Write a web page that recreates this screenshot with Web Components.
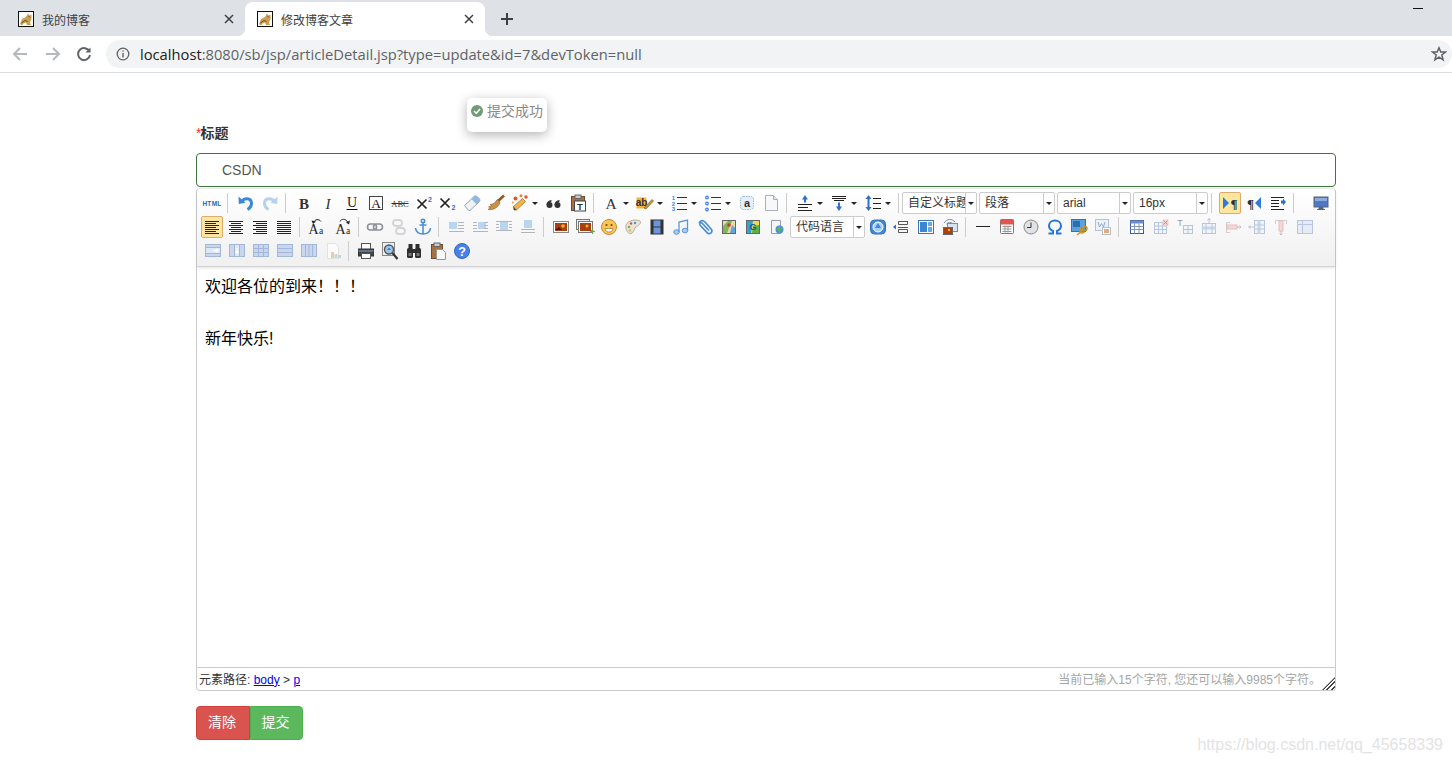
<!DOCTYPE html>
<html lang="zh">
<head>
<meta charset="utf-8">
<title>修改博客文章</title>
<style>
html, body { margin: 0; height: 100%; overflow: hidden; background: #fff; }
body { font-family: "Liberation Sans", "Noto Sans CJK SC", sans-serif; }
</style>
</head>
<body>
<browser-chrome>
  <browser-tab>我的博客</browser-tab>
  <browser-tab active>修改博客文章</browser-tab>
</browser-chrome>
<article-form></article-form>
<toast-message>提交成功</toast-message>
<water-mark>https://blog.csdn.net/qq_45658339</water-mark>

<script>
/**
 * Draws a stack of horizontal lines.
 *
 * @param {number} x1 left edge.
 * @param {number} x2 right edge.
 * @param {number[]} ys the y of every line.
 * @param {string} c stroke colour.
 * @returns {string} svg markup.
 */
const ln = (x1, x2, ys, c = '#333') => `<path d="${ys.map(y => `M${x1} ${y}H${x2}`).join('')}" stroke="${c}" fill="none"/>`

const serif = 'font-family="Liberation Serif, serif"'
const sans = 'font-family="Liberation Sans, sans-serif"'
const imgAlign = (box, rows) => `<rect x="${box[0]}" y="${box[1]}" width="${box[2]}" height="${box[3]}" fill="#8fc0ea"/>${rows}`

// toolbar icons, all in a 20x20 box
const icons = {
  html: `<text x="10" y="13" text-anchor="middle" font-size="6.5" font-weight="700" letter-spacing=".3" fill="#2a6aa5" ${sans}>HTML</text>`,
  undo: '<path d="M5.5 9C8 4.5 15 4.500 15.500 10C15.700 13 14 15 11.500 16.500" fill="none" stroke="#3b87d8" stroke-width="3"/><path d="M2.500 3.500L9.500 9.800L2.800 11Z" fill="#3b87d8"/>',
  redo: '<path d="M14.500 9C12 4.500 5 4.500 4.500 10C4.300 13 6 15 8.500 16.500" fill="none" stroke="#b4d2f0" stroke-width="3"/><path d="M17.500 3.500L10.500 9.800L17.200 11Z" fill="#b4d2f0"/>',
  bold: `<text x="10" y="15.500" text-anchor="middle" font-size="15" font-weight="700" fill="#333" ${serif}>B</text>`,
  italic: `<text x="10" y="15.500" text-anchor="middle" font-size="15" font-style="italic" fill="#333" ${serif}>I</text>`,
  underline: `<text x="10" y="14" text-anchor="middle" font-size="14" fill="#222" ${serif}>U</text>${ln(4.500, 15.500, [16.500], '#111')}`,
  fontborder: `<rect x="3.500" y="3.500" width="13" height="13" fill="#fff" stroke="#444"/><text x="10" y="15" text-anchor="middle" font-size="13.500" fill="#222" ${serif}>A</text>`,
  strike: `<text x="10" y="13.500" text-anchor="middle" font-size="8.500" fill="#444" ${serif}>ABC</text>${ln(1.500, 18.500, [10.500], '#333')}`,
  sup: '<path d="M3.500 6.500L12.500 15.500M12.500 6.500L3.500 15.500" stroke="#222" stroke-width="1.700"/><text x="16" y="8.500" text-anchor="middle" font-size="7" font-weight="700" fill="#2b6fd4" font-family="Liberation Sans, sans-serif">2</text>',
  sub: '<path d="M2.500 5.500L11.500 14.500M11.500 5.500L2.500 14.500" stroke="#222" stroke-width="1.700"/><text x="15.500" y="17" text-anchor="middle" font-size="7" font-weight="700" fill="#2b6fd4" font-family="Liberation Sans, sans-serif">2</text>',
  eraser: '<path d="M2.500 12.500L12 3.500C13 2.700 14 2.700 15 3.500L17.500 6C18.200 7 18 8 17 9L8 17.500H6.500Z" fill="#eef1f5" stroke="#9aa3ad"/><path d="M12 3.500C13 2.700 14 2.700 15 3.500L17.500 6C18.200 7 18 8 17 9L14.500 11.200L9.500 6Z" fill="#8fb7e4"/>',
  brush: '<path d="M18 2.500L11 9" stroke="#8a5a22" stroke-width="2.600"/><path d="M11.500 6.500L14 9.500C12.500 14.500 7 17.500 2 16.500L5 14.500L2.500 14L6 12.500L4 11.500C7 11.500 9.500 9.500 11.500 6.500Z" fill="#c4924a" stroke="#8a5f2a" stroke-width=".6"/>',
  wand: '<path d="M4 17L3.500 13.500L12.500 5.500L15.500 8.500L6.500 17Z" fill="#f0b44c" stroke="#a9752d" stroke-width=".8"/><path d="M3.500 13.500L4 17L6.500 17Z" fill="#444"/><circle cx="5.500" cy="5.500" r="2" fill="#e2562f"/><circle cx="11" cy="2.800" r="1.500" fill="#e2862f"/><circle cx="16" cy="4" r="1.700" fill="#e2562f"/><circle cx="2.800" cy="9.500" r="1" fill="#e2a82f"/>',
  quote: '<g fill="#333"><circle cx="5.500" cy="12" r="3"/><circle cx="13.500" cy="12" r="3"/><path d="M2.500 12C2.500 9 4.500 7.500 7.500 7L7.500 8.500C6 9 5.500 10 5.500 11ZM10.500 12C10.500 9 12.500 7.500 15.500 7L15.500 8.500C14 9 13.500 10 13.500 11Z"/></g>',
  paste: `<rect x="3.500" y="3.500" width="13" height="14" fill="#a9713f" stroke="#70482a"/><rect x="7" y="2" width="6" height="3.500" fill="#ccc" stroke="#666"/><rect x="6.500" y="8" width="11" height="10" fill="#fff" stroke="#445"/><text x="12" y="16.500" text-anchor="middle" font-size="9.500" font-weight="700" fill="#234" ${sans}>T</text>`,
  fontcolor: `<text x="10" y="15.500" text-anchor="middle" font-size="15.500" fill="#333" ${serif}>A</text>`,
  backcolor: `<rect x="1.500" y="4.500" width="10" height="11" fill="#f2b23d"/><text x="6.500" y="13" text-anchor="middle" font-size="10" font-weight="700" fill="#333" ${sans}>ab</text><path d="M9 15L17 6.500L18.500 8L11 16Z" fill="#c9973e" stroke="#6f5320" stroke-width=".6"/>`,
  ol: `<text x="4.500" y="7" text-anchor="middle" font-size="6" font-weight="700" fill="#3b7fe0" ${sans}>1</text><text x="4.500" y="12.500" text-anchor="middle" font-size="6" font-weight="700" fill="#3b7fe0" ${sans}>2</text><text x="4.500" y="18" text-anchor="middle" font-size="6" font-weight="700" fill="#3b7fe0" ${sans}>3</text>${ln(8, 18, [4.500, 10.500, 16.500], '#333')}`,
  ul: `<g fill="none" stroke="#3b7fe0" stroke-width="1.200"><circle cx="4" cy="4.500" r="1.300"/><circle cx="4" cy="10.500" r="1.300"/><circle cx="4" cy="16.500" r="1.300"/></g>${ln(8, 18, [4.500, 10.500, 16.500], '#333')}`,
  selectall: `<rect x="3.500" y="3.500" width="13" height="13" rx="3" fill="#e8eff8" stroke="#8fb2dc" stroke-dasharray="1.500 1"/><text x="10" y="14" text-anchor="middle" font-size="11" font-weight="700" fill="#333" ${sans}>a</text>`,
  cleardoc: '<path d="M4.500 2.500H12.500L16.500 6.500V17.500H4.500Z" fill="#f7f8f9" stroke="#aab0b6"/><path d="M12.500 2.500V6.500H16.500" fill="#e2e4e6" stroke="#aab0b6"/>',
  rowtop: `<path d="M10 2L13 6.500H11V9.500H9V6.500H7Z" fill="#2f6fd0"/>${ln(3, 17, [11.500, 17.500], '#222')}${ln(3, 13, [14.500], '#222')}`,
  rowbottom: `${ln(3, 17, [3.500], '#222')}${ln(3, 17, [5.500], '#222')}${ln(5, 15, [7.500], '#222')}<path d="M10 18L13 13.500H11V9.500H9V13.500H7Z" fill="#2f6fd0"/>`,
  lineheight: `<path d="M5.500 2L8.500 6H6.500V14H8.500L5.500 18L2.500 14H4.500V6H2.500Z" fill="#2f6fd0"/>${ln(10, 18, [5.500, 10.500, 15.500], '#222')}`,
  ltr: `<path d="M3 4L9 10L3 16Z" fill="#2f7bdc"/><text x="14" y="15" text-anchor="middle" font-size="13" font-weight="700" fill="#234" ${serif}>¶</text>`,
  rtl: `<path d="M17 4L11 10L17 16Z" fill="#2f7bdc"/><text x="6.500" y="15" text-anchor="middle" font-size="13" font-weight="700" fill="#234" ${serif}>¶</text>`,
  indent: `${ln(3, 16, [4.500, 16.500], '#222')}${ln(3, 11, [7.500, 10.500, 13.500], '#222')}<path d="M13 7.500H15V5.500L18 9L15 12.500V10.500H13Z" fill="#2f6fd0"/>`,
  full: '<rect x="3" y="4" width="14" height="10" fill="#4d78c8" stroke="#567"/><path d="M4 5H16V8H4Z" fill="#8eabe0"/><path d="M8 14.500H12V16H8ZM6 16.500H14" stroke="#567" fill="#567"/>',
  left: ln(3, 17, [4.500, 8.500, 12.500, 16.500], '#222') + ln(3, 14, [6.500, 10.500, 14.500], '#222'),
  center: ln(3, 17, [4.500, 8.500, 12.500, 16.500], '#222') + ln(5, 15, [6.500, 10.500, 14.500], '#222'),
  right: ln(3, 17, [4.500, 8.500, 12.500, 16.500], '#222') + ln(6, 17, [6.500, 10.500, 14.500], '#222'),
  justify: ln(3, 17, [4.500, 6.500, 8.500, 10.500, 12.500, 14.500, 16.500], '#222'),
  tolower: `<text x="7.500" y="17" text-anchor="middle" font-size="14" fill="#222" ${serif}>A</text><text x="15" y="17" text-anchor="middle" font-size="9.500" fill="#222" ${serif}>a</text><path d="M8 5C8.500 2.500 13 1.500 15 4.500" fill="none" stroke="#222"/><path d="M5.500 3.500L10 4.500L7 7Z" fill="#222"/>`,
  toupper: `<text x="7.500" y="17" text-anchor="middle" font-size="14" fill="#222" ${serif}>A</text><text x="15" y="17" text-anchor="middle" font-size="9.500" fill="#222" ${serif}>a</text><path d="M7 4.500C8 1.500 13 1.500 14.500 5" fill="none" stroke="#222"/><path d="M17 3.500L16 7.500L13 5.500Z" fill="#222"/>`,
  link: '<rect x="2.500" y="7" width="9" height="6" rx="3" fill="none" stroke="#8b8f96" stroke-width="1.600"/><rect x="8.500" y="7" width="9" height="6" rx="3" fill="none" stroke="#8b8f96" stroke-width="1.600"/>',
  unlink: '<rect x="4" y="3" width="9" height="6" rx="3" fill="none" stroke="#d2d4d7" stroke-width="1.800"/><rect x="7" y="11" width="9" height="6" rx="3" fill="none" stroke="#d2d4d7" stroke-width="1.800"/>',
  anchor: '<g fill="none" stroke="#4d8fd6" stroke-width="1.600"><circle cx="10" cy="4" r="1.700"/><path d="M10 5.800V17M6.500 8H13.500M2.500 11C3 15 6 17 10 17C14 17 17 15 17.500 11"/></g>',
  imgleft: imgAlign([3, 5, 8, 7], ln(12, 18, [5.500, 8.500, 11.500], '#889')) + ln(3, 18, [14.500], '#889'),
  imgright: imgAlign([8, 5, 8, 7], ln(3, 7, [5.500, 8.500, 11.500], '#889')) + ln(14, 18, [5.500, 8.500, 11.500], '#889') + ln(3, 18, [14.500], '#889'),
  imgnone: imgAlign([6, 5, 8, 8], ln(2, 18, [4.500, 13.500], '#889')) + ln(2, 5, [7.500, 10.500], '#889') + ln(15, 18, [7.500, 10.500], '#889'),
  imgcenter: imgAlign([6, 3, 8, 8], ln(3, 17, [12.500, 15.500], '#889')),
  image: '<rect x="2.500" y="4.500" width="15" height="11" fill="#fff" stroke="#888"/><rect x="4" y="6" width="12" height="8" fill="#a8400f"/><circle cx="12" cy="9" r="1.800" fill="#f6b02c"/><path d="M4 13L8 10L11 13Z" fill="#3a1d06"/>',
  images: '<rect x="1.500" y="2.500" width="13" height="10" fill="#eee" stroke="#777"/><rect x="3.500" y="4.500" width="14" height="11" fill="#fff" stroke="#777"/><rect x="5" y="6" width="11" height="8" fill="#a8400f"/><circle cx="12" cy="9" r="1.500" fill="#f6b02c"/><path d="M16 13H18.500V15.500H16V13Z M17 12H18V17H17Z M15 14H20V15H15Z" fill="#64b23c"/>',
  emotion: '<circle cx="10" cy="10" r="7.500" fill="#f9c74f" stroke="#c9873a"/><circle cx="7.500" cy="8" r="1.100" fill="#7a4a14"/><circle cx="12.500" cy="8" r="1.100" fill="#7a4a14"/><path d="M6 11.500H14C14 14 12 15 10 15C8 15 6 14 6 11.500Z" fill="#fff" stroke="#a9672a" stroke-width=".7"/>',
  palette: '<path d="M3 8C5 3 13 2 17 4C19 6 15 9 13 10C11 11 12 13 9 16C6 18 2 14 3 8Z" fill="#e8e4d6" stroke="#b7b19b"/><circle cx="8" cy="6.500" r="1.200" fill="#d9534f"/><circle cx="12" cy="6" r="1.200" fill="#4a90d9"/><circle cx="6" cy="10" r="1.200" fill="#6db24a"/><circle cx="7" cy="13.500" r="1.200" fill="#e8b63a"/>',
  film: '<rect x="3.500" y="2.500" width="13" height="15" fill="#333"/><rect x="6.500" y="3.500" width="7" height="6" fill="#6d95dd"/><rect x="6.500" y="10.500" width="7" height="6" fill="#6d95dd"/>',
  music: '<g fill="#a9cdf2" stroke="#5c97d6"><ellipse cx="5.500" cy="15" rx="2.800" ry="2.300"/><ellipse cx="14" cy="13.500" rx="2.800" ry="2.300"/><path d="M8 15V5L16.500 3V13.500" fill="none" stroke-width="1.300"/></g>',
  clip: '<path d="M4 6C6 3 8 3 10 5L16.500 12.500C18 15 15 18 12.500 16L5 8C4 6.500 6 5 7.500 6.500L14 13.500" fill="none" stroke="#4d8fd6" stroke-width="1.700"/>',
  map: '<rect x="3.500" y="3.500" width="13" height="13" fill="#e7d9a8" stroke="#666"/><path d="M4 9L9 4H13L8 16H4Z" fill="#7fb65b"/><path d="M13 8L16 11V16H11Z" fill="#6aa0d8"/><circle cx="10" cy="8" r="1.800" fill="#d9342b"/>',
  gmap: '<rect x="3.500" y="3.500" width="13" height="13" fill="#f3d84a" stroke="#666"/><path d="M4 4H10L8 16H4Z" fill="#34a2c9"/><path d="M10 9L16 8V16H9Z" fill="#5fb04a"/><text x="10" y="13" text-anchor="middle" font-size="9" font-weight="700" fill="#1858a8" font-family="Liberation Sans, sans-serif">G</text>',
  iframe: '<path d="M4.500 3.500H13.500V16.500H4.500Z" fill="#f4f5f6" stroke="#99a"/><circle cx="12.500" cy="12.500" r="4" fill="#4a97c9"/><path d="M10 11L13 10L14 13L12 15Z" fill="#6db24a"/>',
  app: '<rect x="2.500" y="3" width="15" height="14" rx="4" fill="#3f88d8" stroke="#3471b8"/><circle cx="10" cy="10" r="5" fill="#a9d0f3" stroke="#fff"/><path d="M7 11L10 6L13 11Z" fill="#3f88d8"/>',
  pagebreak: `<path d="M1 10L4 7.500V12.500Z" fill="#2f6fd0"/><path d="M6.500 4.500H16M6.500 15.500H16M6.500 4.500V7.500H15.500V4.500M6.500 15.500V12.500H15.500V15.500" fill="none" stroke="#555"/>${ln(6, 16, [10.500], '#555')}`,
  template: '<rect x="2.500" y="3.500" width="15" height="13" fill="#fff" stroke="#3d76b8"/><rect x="4" y="5" width="7" height="10" fill="#3d86cf"/><rect x="12" y="5" width="4" height="4" fill="#6ca8e0"/><rect x="12" y="10" width="4" height="5" fill="#6ca8e0"/>',
  background: '<rect x="7.500" y="6.500" width="10" height="8" fill="#d8e4f3" stroke="#7a8ea8"/><rect x="3.500" y="10.500" width="9" height="7" fill="#a8400f" stroke="#666"/><circle cx="9" cy="13" r="1.200" fill="#f6b02c"/><path d="M4 6C7 1.500 12 1.500 15 5M6.500 7C8 5 11 5 12.500 6.500" fill="none" stroke="#7a8ea8"/>',
  hr: ln(3, 17, [9.500], '#222'),
  date: '<rect x="3.500" y="2.500" width="13" height="14" rx="1" fill="#fff" stroke="#777"/><rect x="3.500" y="2.500" width="13" height="5" fill="#e2554c"/><path d="M5.500 9.500H14.500M5.500 12H14.500M5.500 14.500H14.500M8 8.500V15.500M11 8.500V15.500" stroke="#999" fill="none"/>',
  time: '<circle cx="10" cy="10" r="7" fill="#dfe2e6" stroke="#888"/><path d="M10 5.500V10.500H6" fill="none" stroke="#333"/>',
  omega: '<path d="M3.500 16.500H8V14C5.500 13 4 11.500 4 8.800C4 5.500 6.700 3.500 10 3.500C13.300 3.500 16 5.500 16 8.800C16 11.500 14.500 13 12 14V16.500H16.500" fill="none" stroke="#2576d8" stroke-width="2"/>',
  wordimage: '<rect x="2.500" y="2.500" width="14" height="12" fill="#5aa1dd" stroke="#3a6fa8"/><rect x="4" y="4" width="7" height="6" fill="#2b6fb0"/><circle cx="13" cy="14" r="2" fill="none" stroke="#c99024" stroke-width="1.400"/><circle cx="16" cy="11.500" r="2" fill="none" stroke="#c99024" stroke-width="1.400"/><path d="M8 18L15 12M11 10L15 16" stroke="#c99024" stroke-width="1.200"/>',
  drafts: '<rect x="2.500" y="2.500" width="13" height="11" fill="#e8eff8" stroke="#7f9fc8"/><path d="M5 5L6.500 10L8.500 6.500L10.500 10L12 5" fill="none" stroke="#3f78c0"/><rect x="9.500" y="10.500" width="8" height="7" fill="#fff" stroke="#999"/><rect x="11" y="12" width="5" height="4" fill="#cf7a3b"/>',
  table: '<rect x="3.500" y="3.500" width="13" height="13" fill="#fff" stroke="#3c5a98"/><rect x="3.500" y="3.500" width="13" height="3" fill="#6d8cc8"/><path d="M3.500 9.500H16.500M3.500 12.500H16.500M7.500 6.500V16.500M12 6.500V16.500" stroke="#7f94c0" fill="none"/>',
  tabledel: '<rect x="3.500" y="5.500" width="12" height="11" fill="#f3f6fb" stroke="#8ea6cc"/><path d="M3.500 9H15.500M3.500 12.500H15.500M7.500 5.500V16.500M11.500 5.500V16.500" stroke="#8ea6cc" fill="none"/><rect x="11.500" y="2.500" width="6" height="6" fill="#f5b7b1"/><path d="M12.500 3.500L16.500 7.500M16.500 3.500L12.500 7.500" stroke="#c9443a"/>',
  tabletitle: `<text x="5" y="8.500" text-anchor="middle" font-size="9" fill="#555" ${sans}>T</text><rect x="8.500" y="8.500" width="9" height="8" fill="#eef3fa" stroke="#8ea6cc"/><path d="M8.500 12.500H17.500M13 8.500V16.500" stroke="#8ea6cc"/>`,
  rowins: '<rect x="3.500" y="6.500" width="13" height="10" fill="#eef3fa" stroke="#8ea6cc"/><rect x="3.500" y="9.500" width="13" height="3" fill="#a8c3e8"/><path d="M10 1.500V6M8.500 3.500L10 1.500L11.500 3.500M7 6.500V16.500M13 6.500V16.500" stroke="#8ea6cc" fill="none"/>',
  rowdel: '<path d="M3.500 5.500V15.500M3.500 5.500H7M3.500 15.500H7" stroke="#b3b3b3" fill="none"/><rect x="4" y="8" width="10" height="4" fill="#f5c2c0" stroke="#d89a98"/><path d="M14 10H18M16.500 8.500L18 10L16.500 11.500" stroke="#999" fill="none"/>',
  colins: '<rect x="7.500" y="3.500" width="10" height="13" fill="#eef3fa" stroke="#8ea6cc"/><rect x="10.500" y="3.500" width="3" height="13" fill="#a8c3e8"/><path d="M1.500 10H7M3.500 8.500L1.500 10L3.500 11.500M7.500 8H17.500M7.500 12H17.500" stroke="#8ea6cc" fill="none"/>',
  coldel: '<path d="M4.500 3.500H15.500M4.500 3.500V7M15.500 3.500V7" stroke="#b3b3b3" fill="none"/><rect x="8" y="4" width="4" height="10" fill="#f5c2c0" stroke="#d89a98"/><path d="M10 14V18M8.500 16.500L10 18L11.500 16.500" stroke="#999" fill="none"/>',
  merge: '<rect x="2.500" y="3.500" width="15" height="13" fill="#dbe5f4" stroke="#8ea6cc"/><path d="M2.500 7.500H17.500M7.500 3.500V16.500" stroke="#8ea6cc" fill="none"/>',
  cellsright: '<rect x="2.500" y="3.500" width="15" height="12" fill="#c9d6ee" stroke="#a3b8d8"/><rect x="2.500" y="6.500" width="15" height="6" fill="#dfe8f5" stroke="#a3b8d8"/><path d="M10.500 9.500H15M13.500 8L15 9.500L13.500 11" stroke="#fff" stroke-width="1.300" fill="none"/>',
  cellsdown: '<rect x="2.500" y="3.500" width="15" height="12" fill="#c9d6ee" stroke="#a3b8d8"/><rect x="7.500" y="3.500" width="5" height="12" fill="#dfe8f5" stroke="#a3b8d8"/><path d="M10 7V12M8.500 10.500L10 12L11.500 10.500" stroke="#fff" stroke-width="1.300" fill="none"/>',
  gridc: '<rect x="2.500" y="3.500" width="15" height="12" fill="#c9d6ee" stroke="#a3b8d8"/><path d="M2.500 7.500H17.500M2.500 11.500H17.500M7.500 3.500V15.500M12.500 3.500V15.500" stroke="#a3b8d8" fill="none"/>',
  gridr: '<rect x="2.500" y="3.500" width="15" height="12" fill="#c9d6ee" stroke="#a3b8d8"/><path d="M2.500 7.500H17.500M2.500 11.500H17.500" stroke="#a3b8d8" fill="none"/>',
  grido: '<rect x="2.500" y="3.500" width="15" height="12" fill="#c9d6ee" stroke="#a3b8d8"/><path d="M6.500 3.500V15.500M10 3.500V15.500M13.500 3.500V15.500" stroke="#a3b8d8" fill="none"/>',
  chart: '<path d="M4.500 2.500H12.500L15.500 5.500V17.500H4.500Z" fill="#fbfbfb" stroke="#e2e2e2"/><rect x="8" y="11" width="3" height="6" fill="#ecc9b2"/><rect x="11.500" y="13" width="3" height="4" fill="#c4dfb8"/><rect x="15" y="14" width="3" height="3" fill="#bdd5ee"/>',
  print: '<rect x="5.500" y="2.500" width="9" height="6" fill="#fff" stroke="#555"/><rect x="2.500" y="8" width="15" height="7" fill="#444" stroke="#333"/><rect x="5.500" y="12.500" width="9" height="5" fill="#fff" stroke="#555"/><path d="M2.500 10H17.500" stroke="#7ca4d8"/>',
  preview: '<rect x="2.500" y="1.500" width="12" height="13" fill="#eef1f4" stroke="#888"/><circle cx="9" cy="8.500" r="4.500" fill="#9cc7ea" stroke="#555" stroke-width="1.400"/><path d="M7 9L9 6.500L11 9Z" fill="#3b7dbd"/><path d="M12.500 12L17.500 18" stroke="#333" stroke-width="2.200"/>',
  search: '<g fill="#2e2e2e"><rect x="3" y="7" width="6" height="10" rx="1.500"/><rect x="11" y="7" width="6" height="10" rx="1.500"/><rect x="4.500" y="3" width="4" height="5"/><rect x="11.500" y="3" width="4" height="5"/><rect x="8.500" y="8" width="3" height="4"/></g><rect x="4.500" y="12" width="3" height="3" fill="#777"/><rect x="12.500" y="12" width="3" height="3" fill="#777"/>',
  pasteplain: '<rect x="3.500" y="3.500" width="11" height="14" fill="#a9713f" stroke="#70482a"/><rect x="6" y="2" width="6" height="3.500" fill="#ccc" stroke="#666"/><path d="M8.500 8.500H14.500L17.500 11.500V18.500H8.500Z" fill="#f7f7f7" stroke="#999"/>',
  help: `<circle cx="10" cy="10" r="7.500" fill="#4a80e8" stroke="#3566c0"/><text x="10" y="14.500" text-anchor="middle" font-size="12.500" font-weight="700" fill="#fff" ${sans}>?</text>`
}

const buttonTemplate = document.createElement('template')
buttonTemplate.innerHTML = `
<style>
:host { display: inline-flex; height: 100%; align-items: center; flex: none; width: 24px; box-sizing: border-box; justify-content: center; }
:host([arrow]) { width: 34px; justify-content: flex-start; padding-left: 1px; }
#box { width: 22px; height: 22px; box-sizing: border-box; border: 1px solid transparent; border-radius: 2px; display: flex; align-items: center; justify-content: center; flex: none; }
:host([on]) #box { background: #ffe69f; border-color: #dcac6c; }
:host([off]) svg { opacity: .6; }
svg { width: 20px; height: 20px; display: block; flex: none; }
#caret { display: none; width: 0; height: 0; border: 3px solid transparent; border-top: 3px solid #222; border-bottom: 0; margin-left: 1px; flex: none; }
:host([arrow]) #caret { display: block; }
</style>
<div id="box"><svg viewBox="0 0 20 20"></svg></div><span id="caret"></span>
`

customElements.define(
  'ue-button',
  /**
   * One toolbar button, the icon is picked by the "icon" attribute.
   */
  class extends HTMLElement {
    /**
     * Creates an instance of the current type.
     */
    constructor () {
      super()
      this.attachShadow({ mode: 'open' }).appendChild(buttonTemplate.content.cloneNode(true))
    }

    /**
     * Called after the element is inserted into the DOM.
     */
    connectedCallback () {
      this.shadowRoot.querySelector('svg').innerHTML = icons[this.getAttribute('icon')] || ''
    }
  }
)

customElements.define(
  'ue-combo',
  /**
   * The select boxes of the toolbar.
   */
  class extends HTMLElement {
    /**
     * Creates an instance of the current type.
     */
    constructor () {
      super()
      this.attachShadow({ mode: 'open' }).innerHTML = `
<style>
:host { display: flex; box-sizing: border-box; height: 22px; flex: none; background: #fff; border: 1px solid #ccc; border-radius: 2px; font-size: 12px; color: #333; }
#label { flex: 1; min-width: 0; overflow: hidden; white-space: nowrap; padding-left: 5px; line-height: 21px; }
#more { width: 10px; flex: none; border-left: 1px solid #ccc; display: flex; align-items: center; justify-content: center; }
#more::after { content: ""; border: 3px solid transparent; border-top: 3px solid #222; border-bottom: 0; }
</style>
<div id="label"><slot></slot></div><div id="more"></div>`
    }
  }
)

customElements.define(
  'ue-sep',
  /**
   * A separator between button groups.
   */
  class extends HTMLElement {
    /**
     * Creates an instance of the current type.
     */
    constructor () {
      super()
      this.attachShadow({ mode: 'open' }).innerHTML = `
<style>
:host { display: flex; flex: none; height: 100%; align-items: center; }
div { width: 1px; height: 20px; background: #ccc; margin-left: 3px; }
</style>
<div></div>`
    }
  }
)

// row specs: "name", "name:d" ghost, "name:a" with caret, "name:o" pressed,
// "|n" separator of n px, "_n" blank of n px, "#w:text" a select box
const rows = [
  'html |10 undo redo |10 bold italic underline fontborder strike sup sub eraser brush wand:a quote paste |9 fontcolor:a backcolor:a ol:a ul:a selectall cleardoc |10 rowtop:a rowbottom:a lineheight:a |7 #75:自定义标题 _2 #76:段落 _2 #74:arial _2 #75:16px |10 ltr:o rtl indent |9 _10 full',
  'left:o center right justify |8 tolower _3 toupper |8 link unlink anchor |9 imgleft:d imgright:d imgnone:d imgcenter:d |9 image images emotion palette film music clip map gmap iframe _1 #75:代码语言 _1 app pagebreak template background |9 hr date time omega wordimage drafts:d |10 table tabledel:d tabletitle:d rowins:d rowdel:d colins:d coldel:d merge:d',
  '_1 cellsright cellsdown gridc gridr grido chart |9 print preview search pasteplain help'
]

customElements.define(
  'ue-toolbar',
  /**
   * The three rows of buttons above the editing area.
   */
  class extends HTMLElement {
    /**
     * Creates an instance of the current type.
     */
    constructor () {
      super()
      const html = rows.map(row => `<div class="row">${row.split(' ').map(item => {
        if (item[0] === '|') return `<ue-sep style="width:${item.slice(1)}px"></ue-sep>`
        if (item[0] === '_') return `<span style="flex:none;width:${item.slice(1)}px"></span>`
        if (item[0] === '#') {
          const [w, text] = item.slice(1).split(':')
          return `<ue-combo style="width:${w}px">${text}</ue-combo>`
        }
        const [name, flag] = item.split(':')
        const attr = { d: 'off', a: 'arrow', o: 'on' }[flag] || ''
        return `<ue-button icon="${name}" ${attr}></ue-button>`
      }).join('')}</div>`).join('')
      this.attachShadow({ mode: 'open' }).innerHTML = `
<style>
:host { display: block; height: 78px; box-sizing: border-box; padding: 2px 0 0 3px; background: linear-gradient(#fff, #f0f0f0); border-bottom: 1px solid #d4d4d4; box-shadow: 0 1px 3px rgba(0,0,0,.12); position: relative; border-radius: 4px 4px 0 0; }
.row { display: flex; height: 24px; align-items: center; }
.row:first-child { height: 25px; }
</style>${html}`
    }
  }
)

customElements.define(
  'rich-editor',
  /**
   * The editor: toolbar, editing area and the bottom status line.
   */
  class extends HTMLElement {
    /**
     * Creates an instance of the current type.
     */
    constructor () {
      super()
      this.attachShadow({ mode: 'open' }).innerHTML = `
<style>
:host { display: block; width: 1140px; height: 503px; box-sizing: border-box; border: 1px solid #ccc; border-top-color: #eee; border-radius: 4px; background: #fff; font-family: "Liberation Sans", "Noto Sans CJK SC", sans-serif; }
#area { height: 400px; box-sizing: border-box; padding: 7px 8px; font-size: 16px; line-height: 26px; color: #000; }
#area p { margin: 0; min-height: 26px; }
#bottom { height: 23px; box-sizing: border-box; border-top: 1px solid #ccc; display: flex; justify-content: space-between; align-items: center; font-size: 12px; padding: 0 14px 2px 2px; color: #333; position: relative; }
a { color: #00e; }
#count { color: #a5a5a5; }
#grip { position: absolute; right: 0; bottom: 0; width: 13px; height: 13px; background: repeating-linear-gradient(135deg, transparent 0 2px, #444 2px 3.300px); clip-path: polygon(100% 0, 100% 100%, 0 100%); }
</style>
<ue-toolbar></ue-toolbar>
<div id="area"><p>欢迎各位的到来！！！</p><p></p><p>新年快乐!</p></div>
<div id="bottom">
  <span>元素路径: <a href="#">body</a> &gt; <a href="#">p</a></span>
  <span id="count">当前已输入15个字符, 您还可以输入9985个字符。</span>
  <div id="grip"></div>
</div>`
    }
  }
)

customElements.define(
  'article-form',
  /**
   * The form of the article page.
   */
  class extends HTMLElement {
    /**
     * Creates an instance of the current type.
     */
    constructor () {
      super()
      this.attachShadow({ mode: 'open' }).innerHTML = `
<style>
:host { display: block; padding: 50px 0 0 196px; font-family: "Liberation Sans", "Noto Sans CJK SC", sans-serif; font-size: 14px; }
label { display: block; height: 20px; line-height: 20px; margin-bottom: 10px; font-weight: 700; color: #333; }
label i { color: #e33; font-style: normal; font-weight: 400; margin-right: -1px; }
#title { width: 1140px; height: 34px; box-sizing: border-box; border: 1px solid #3c763d; border-radius: 4px; padding-left: 25px; line-height: 32px; color: #555; margin-bottom: 1px; background: #fff; }
#actions { display: flex; margin-top: 15px; }
button { width: 54px; height: 34px; border: 1px solid; margin: 0; padding: 0 2px 4px 0; color: #fff; font: inherit; flex: none; }
.clear { background: #d9534f; border-color: #d43f3a; border-radius: 4px 0 0 4px; }
.submit { background: #5cb85c; border-color: #4cae4c; border-radius: 0 4px 4px 0; width: 53px; }
</style>
<label><i>*</i>标题</label>
<div id="title">CSDN</div>
<rich-editor></rich-editor>
<div id="actions"><button class="clear">清除</button><button class="submit">提交</button></div>`
    }
  }
)

customElements.define(
  'browser-tab',
  /**
   * A tab of the browser strip.
   */
  class extends HTMLElement {
    /**
     * Creates an instance of the current type.
     */
    constructor () {
      super()
      this.attachShadow({ mode: 'open' }).innerHTML = `
<style>
:host { display: flex; align-items: center; width: 239px; height: 34px; box-sizing: border-box; padding: 0 11px 0 12px; border-radius: 8px 8px 0 0; position: relative; font-size: 12px; color: #3c4043; flex: none; }
:host([active]) { background: #fff; width: 240px; }
:host([active])::before, :host([active])::after { content: ""; position: absolute; bottom: 0; width: 8px; height: 8px; }
:host([active])::before { left: -8px; background: radial-gradient(circle at 0 0, transparent 8px, #fff 8.500px); }
:host([active])::after { right: -8px; background: radial-gradient(circle at 100% 0, transparent 8px, #fff 8.500px); }
#icon { width: 16px; height: 16px; margin-right: 8px; flex: none; }
#text { flex: 1; white-space: nowrap; overflow: hidden; }
#close { width: 10px; height: 10px; flex: none; }
</style>
<svg id="icon" viewBox="0 0 16 16"><rect x=".5" y=".5" width="15" height="15" fill="#fff" stroke="#111"/><path d="M2 13L4 8L8 6L10 2.500L11.500 4.500L13.500 3.500L13.500 8L12 11.500L13 14H9L8 11.500L5.500 12.500L4 14.500Z" fill="#c9a052"/><path d="M3.500 12L7 9.500L9.500 10.500M10.500 5L12 6.500" stroke="#6e5120" fill="none"/></svg>
<span id="text"><slot></slot></span>
<svg id="close" viewBox="0 0 10 10"><path d="M1 1L9 9M9 1L1 9" stroke="#3c4043" stroke-width="1.500"/></svg>`
    }
  }
)

customElements.define(
  'browser-chrome',
  /**
   * The tab strip and the address row of the browser.
   */
  class extends HTMLElement {
    /**
     * Creates an instance of the current type.
     */
    constructor () {
      super()
      this.attachShadow({ mode: 'open' }).innerHTML = `
<style>
:host { display: block; font-family: "Liberation Sans", "Noto Sans CJK SC", sans-serif; }
#strip { height: 36px; box-sizing: border-box; background: #dee1e6; padding: 2px 0 0 6px; display: flex; position: relative; }
#plus { width: 14px; height: 14px; margin: 10px 0 0 15px; flex: none; }
#min { position: absolute; right: 29px; top: 8px; width: 10px; height: 1px; background: #111; }
#bar { height: 37px; box-sizing: border-box; border-bottom: 1px solid #dadce0; background: #fff; display: flex; align-items: center; padding-left: 12px; }
.nav { width: 16px; height: 16px; flex: none; margin-right: 17px; }
#omni { flex: 1; height: 28px; margin-left: 14px; background: #f1f3f4; border-radius: 14px; display: flex; align-items: center; padding: 0 5px 0 10px; }
#info { width: 14px; height: 14px; margin-right: 10px; flex: none; }
#url { flex: 1; font-family: "Open Sans", sans-serif; font-size: 14.730px; color: #5f6368; white-space: nowrap; }
#url b { font-weight: 400; color: #202124; }
#star { width: 16px; height: 16px; flex: none; }
</style>
<div id="strip">
  <slot></slot>
  <svg id="plus" viewBox="0 0 14 14"><path d="M7 1V13M1 7H13" stroke="#3c4043" stroke-width="2"/></svg>
  <div id="min"></div>
</div>
<div id="bar">
  <svg class="nav" viewBox="0 0 16 16"><path d="M15 8H2M8 2L2 8L8 14" fill="none" stroke="#b6b9bc" stroke-width="2"/></svg>
  <svg class="nav" viewBox="0 0 16 16"><path d="M1 8H14M8 2L14 8L8 14" fill="none" stroke="#b6b9bc" stroke-width="2"/></svg>
  <svg class="nav" viewBox="0 0 16 16" style="margin-right:0;margin-left:-2px"><path d="M13.500 5.500A6 6 0 1 0 14 9" fill="none" stroke="#5f6368" stroke-width="2"/><path d="M14.500 1.500V6.500H9.500Z" fill="#5f6368"/></svg>
  <div id="omni">
    <svg id="info" viewBox="0 0 14 14"><circle cx="7" cy="7" r="5.800" fill="none" stroke="#5f6368" stroke-width="1.300"/><path d="M6.300 6H7.700V10.500H6.300ZM6.300 3.400H7.700V4.800H6.300Z" fill="#5f6368"/></svg>
    <span id="url"><b>localhost</b>:8080/sb/jsp/articleDetail.jsp?type=update&amp;id=7&amp;devToken=null</span>
    <svg id="star" viewBox="0 0 16 16"><path d="M8 1.800L9.800 6H14.500L10.800 9L12.100 13.800L8 11.100L3.900 13.800L5.200 9L1.500 6H6.200Z" fill="none" stroke="#5f6368" stroke-width="1.500"/></svg>
  </div>
</div>`
    }
  }
)

customElements.define(
  'toast-message',
  /**
   * The small notice floating above the form.
   */
  class extends HTMLElement {
    /**
     * Creates an instance of the current type.
     */
    constructor () {
      super()
      this.attachShadow({ mode: 'open' }).innerHTML = `
<style>
:host { position: absolute; left: 467px; top: 98px; width: 80px; height: 34px; box-sizing: border-box; background: #fff; border-radius: 5px; box-shadow: 0 3px 12px rgba(0,0,0,.3); font-family: "Liberation Sans", "Noto Sans CJK SC", sans-serif; font-size: 14px; color: #888; display: flex; padding: 4px 0 0 4px; line-height: 18px; }
svg { width: 12px; height: 12px; margin: 3px 4px 0 0; flex: none; }
</style>
<svg viewBox="0 0 12 12"><circle cx="6" cy="6" r="6" fill="#6f9b76"/><path d="M3 6L5.300 8.300L9 4" fill="none" stroke="#fff" stroke-width="1.600"/></svg>
<span><slot></slot></span>`
    }
  }
)

customElements.define(
  'water-mark',
  /**
   * The watermark text in the lower right corner.
   */
  class extends HTMLElement {
    /**
     * Creates an instance of the current type.
     */
    constructor () {
      super()
      this.attachShadow({ mode: 'open' }).innerHTML = `
<style>
:host { position: absolute; right: 9px; top: 735px; font: 16px/20px "Liberation Sans", sans-serif; color: #e3e3e3; white-space: nowrap; }
</style>
<slot></slot>`
    }
  }
)
</script>
</body>
</html>
